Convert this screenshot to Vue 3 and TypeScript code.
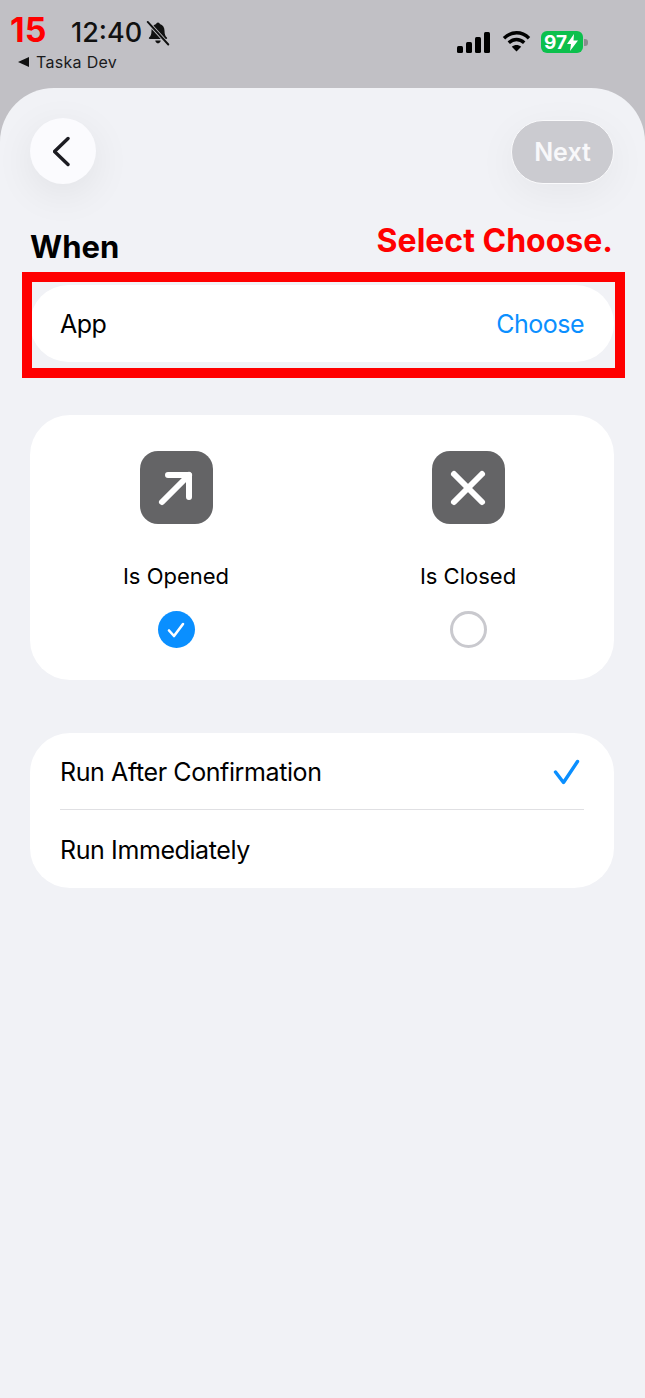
<template>
  <div class="screen">
    <div class="step-num">15</div>
    <header class="status">
      <div class="status-left">
        <div class="clock">
          <span>12:40</span>
          <svg width="26" height="26" viewBox="0 0 24 24">
            <path d="M12 2.200c-1 0-1.600.7-1.700 1.600C7.400 4.500 6 7 6 10c0 3.400-.8 5-2.200 6.200-.5.500-.2 1.300.6 1.300h15.200c.8 0 1.100-.8.600-1.300C18.800 15 18 13.400 18 10c0-3-1.400-5.500-4.300-6.200-.1-.9-.7-1.600-1.700-1.600zM9.500 19c.2 1.500 1.200 2.600 2.500 2.600s2.300-1.100 2.500-2.600z" fill="#111" />
            <path d="M2.500 1.800 21.500 22.600" stroke="#c1c0c5" stroke-width="3.400" />
            <path d="M2.500 1.800 21.500 22.600" stroke="#111" stroke-width="1.800" stroke-linecap="round" />
          </svg>
        </div>
        <div class="back-app"><span class="tri"></span>Taska Dev</div>
      </div>
      <div class="status-right">
        <svg class="signal" width="34" height="21" viewBox="0 0 34 21">
          <rect x="0" y="14" width="6" height="7" rx="1.500" />
          <rect x="9" y="10" width="6" height="11" rx="1.500" />
          <rect x="18" y="5" width="6" height="16" rx="1.500" />
          <rect x="27" y="0" width="6" height="21" rx="1.500" />
        </svg>
        <svg class="wifi" width="29" height="22" viewBox="0 0 29 22" fill="none" stroke="#000" stroke-width="3.400">
          <path d="M2 8.200C9.200 1 19.800 1 27 8.200" />
          <path d="M6.800 12.800C11.400 8.400 17.600 8.400 22.200 12.800" />
          <path d="M14.500 21.500 9.800 16.800C12.600 14.500 16.400 14.500 19.200 16.800Z" fill="#000" stroke="none" />
        </svg>
        <div class="battery">
          <div class="batt-body">97<svg width="11" height="17" viewBox="0 0 11 17"><path d="M7 0 0 10h4l-1 7 8-10.500H6.500z" fill="#fff" /></svg></div>
          <span class="batt-cap"></span>
        </div>
      </div>
    </header>

    <main class="sheet">
      <div class="top-row">
        <button class="back-btn">
          <svg width="20" height="32" viewBox="0 0 20 32" fill="none">
            <path d="M15 3.500 1.500 16.500 15 29.500" stroke="#1c1c22" stroke-width="3.400" stroke-linecap="round" stroke-linejoin="round" />
          </svg>
        </button>
        <button class="next-btn"><span>Next</span></button>
      </div>

      <h2 class="title">When</h2>

      <section class="card app-card">
        <span>App</span>
        <span class="choose">Choose</span>
      </section>

      <section class="card triggers">
        <div v-for="t in triggers" :key="t.label" class="trigger">
          <div class="tile">
            <svg width="44" height="44" viewBox="0 0 44 44" fill="none" stroke="#fff" stroke-width="6" stroke-linecap="round" stroke-linejoin="round">
              <path v-for="d in t.paths" :key="d" :d="d" />
            </svg>
          </div>
          <div class="trigger-label">{{ t.label }}</div>
          <div v-if="t.selected" class="radio on">
            <svg width="22" height="22" viewBox="0 0 22 22" fill="none">
              <path d="M4 11.500 9 17 18 5" stroke="#fff" stroke-width="2.600" stroke-linecap="round" stroke-linejoin="round" />
            </svg>
          </div>
          <div v-else class="radio"></div>
        </div>
      </section>

      <section class="card options">
        <div class="option">
          <span>Run After Confirmation</span>
          <svg class="tick" width="28" height="26" viewBox="0 0 28 26" fill="none">
            <path d="M3.500 13 11.500 23.500 25.500 2.500" stroke="#0a8fff" stroke-width="3.400" stroke-linecap="round" stroke-linejoin="round" />
          </svg>
        </div>
        <div class="divider"></div>
        <div class="option"><span>Run Immediately</span></div>
      </section>
    </main>

    <div class="hint">Select Choose.</div>
    <div class="highlight"></div>
  </div>
</template>

<script setup lang="ts">
interface Trigger {
  label: string
  selected: boolean
  paths: string[]
}

const triggers: Trigger[] = [
  { label: 'Is Opened', selected: true, paths: ['M8 36 35 9', 'M14 9H35V31'] },
  { label: 'Is Closed', selected: false, paths: ['M8 8 36 36', 'M36 8 8 36'] },
]
</script>

<style>
html,
body {
  margin: 0;
  background: #f1f2f6;
}
</style>

<style scoped>
.screen {
  position: relative;
  width: 645px;
  height: 1398px;
  overflow: hidden;
  background: #c1c0c5;
  font-family: Inter, "Liberation Sans", sans-serif;
  color: #000;
}
.step-num {
  position: absolute;
  left: 10px;
  top: 12px;
  font-size: 34px;
  line-height: 36px;
  font-weight: 700;
  color: #ff0000;
}
.status {
  height: 88px;
  display: flex;
  justify-content: space-between;
  box-sizing: border-box;
  padding: 18px 57px 0 18px;
}
.status-left {
  display: flex;
  flex-direction: column;
}
.clock {
  display: flex;
  align-items: center;
  gap: 3px;
  height: 30px;
  margin-left: 53px;
  font-size: 27px;
  line-height: 30px;
  font-weight: 500;
  color: #111;
}
.back-app {
  display: flex;
  align-items: center;
  gap: 7px;
  margin-top: 5px;
  font-size: 16px;
  line-height: 18px;
  letter-spacing: 0.300px;
  color: #1a1a1c;
}
.tri {
  width: 0;
  height: 0;
  border-style: solid;
  border-width: 5.500px 11px 5.500px 0;
  border-color: transparent #111 transparent transparent;
}
.status-right {
  display: flex;
  align-items: flex-start;
  gap: 10px;
  padding-top: 14px;
}
.signal {
  margin-right: 1px;
}
.wifi {
  margin-top: -2px;
}
.battery {
  display: flex;
  align-items: center;
  gap: 1px;
  margin-top: -1px;
}
.batt-body {
  width: 42px;
  height: 22px;
  box-sizing: border-box;
  padding-left: 3px;
  display: flex;
  align-items: center;
  border-radius: 6px;
  background: #0cc04d;
  color: #fff;
  font-size: 19px;
  font-weight: 700;
}
.batt-cap {
  width: 4px;
  height: 7px;
  border-radius: 0 3px 3px 0;
  background: #8b8b8e;
}
.sheet {
  height: 1310px;
  box-sizing: border-box;
  padding: 30px 31px 0 30px;
  background: #f1f2f6;
  border-radius: 54px 54px 0 0;
}
.top-row {
  display: flex;
  justify-content: space-between;
  align-items: center;
  height: 66px;
}
.back-btn {
  width: 66px;
  height: 66px;
  padding: 0;
  border: none;
  border-radius: 50%;
  display: flex;
  align-items: center;
  justify-content: center;
  background: #fbfbfe;
  box-shadow: 0 10px 40px rgba(0, 0, 0, 0.07);
}
.next-btn {
  width: 103px;
  height: 64px;
  margin-top: 2px;
  padding: 0;
  border: 1px solid #fafafc;
  border-radius: 32px;
  background: #cbcbd0;
  color: #f8f8fa;
  font: 600 25px Inter, "Liberation Sans", sans-serif;
  box-shadow: 0 10px 40px rgba(0, 0, 0, 0.05);
}
.title {
  margin: 45px 0 0;
  font-size: 31px;
  line-height: 36px;
  font-weight: 700;
}
.card {
  background: #fff;
  border-radius: 40px;
}
.app-card {
  margin-top: 20px;
  height: 77px;
  box-sizing: border-box;
  padding: 0 30px;
  display: flex;
  align-items: center;
  justify-content: space-between;
  font-size: 25px;
  letter-spacing: -0.500px;
}
.choose {
  color: #0a8fff;
}
.triggers {
  margin-top: 53px;
  height: 265px;
  display: grid;
  grid-template-columns: 1fr 1fr;
  padding: 36px 0 0;
  box-sizing: border-box;
}
.trigger {
  display: flex;
  flex-direction: column;
  align-items: center;
}
.tile {
  width: 73px;
  height: 73px;
  border-radius: 18px;
  background: #646466;
  display: flex;
  align-items: center;
  justify-content: center;
}
.trigger-label {
  margin-top: 38px;
  font-size: 22px;
  line-height: 28px;
  font-weight: 400;
}
.radio {
  margin-top: 21px;
  width: 37px;
  height: 37px;
  box-sizing: border-box;
  border: 3px solid #c9c9ce;
  border-radius: 50%;
}
.radio.on {
  border: none;
  background: #0a8fff;
  display: flex;
  align-items: center;
  justify-content: center;
}
.options {
  margin-top: 53px;
  height: 155px;
  padding: 0 30px;
}
.option {
  height: 77px;
  display: flex;
  align-items: center;
  justify-content: space-between;
  font-size: 25px;
  letter-spacing: -0.400px;
}
.tick {
  margin-right: 4px;
}
.divider {
  height: 1px;
  margin: -1px 0 1px;
  background: #e0e0e3;
}
.hint {
  position: absolute;
  right: 32px;
  top: 222px;
  font-size: 32px;
  line-height: 38px;
  font-weight: 700;
  color: #ff0000;
}
.highlight {
  position: absolute;
  left: 22px;
  top: 272px;
  width: 603px;
  height: 106px;
  box-sizing: border-box;
  border: 10px solid #ff0000;
}
</style>
